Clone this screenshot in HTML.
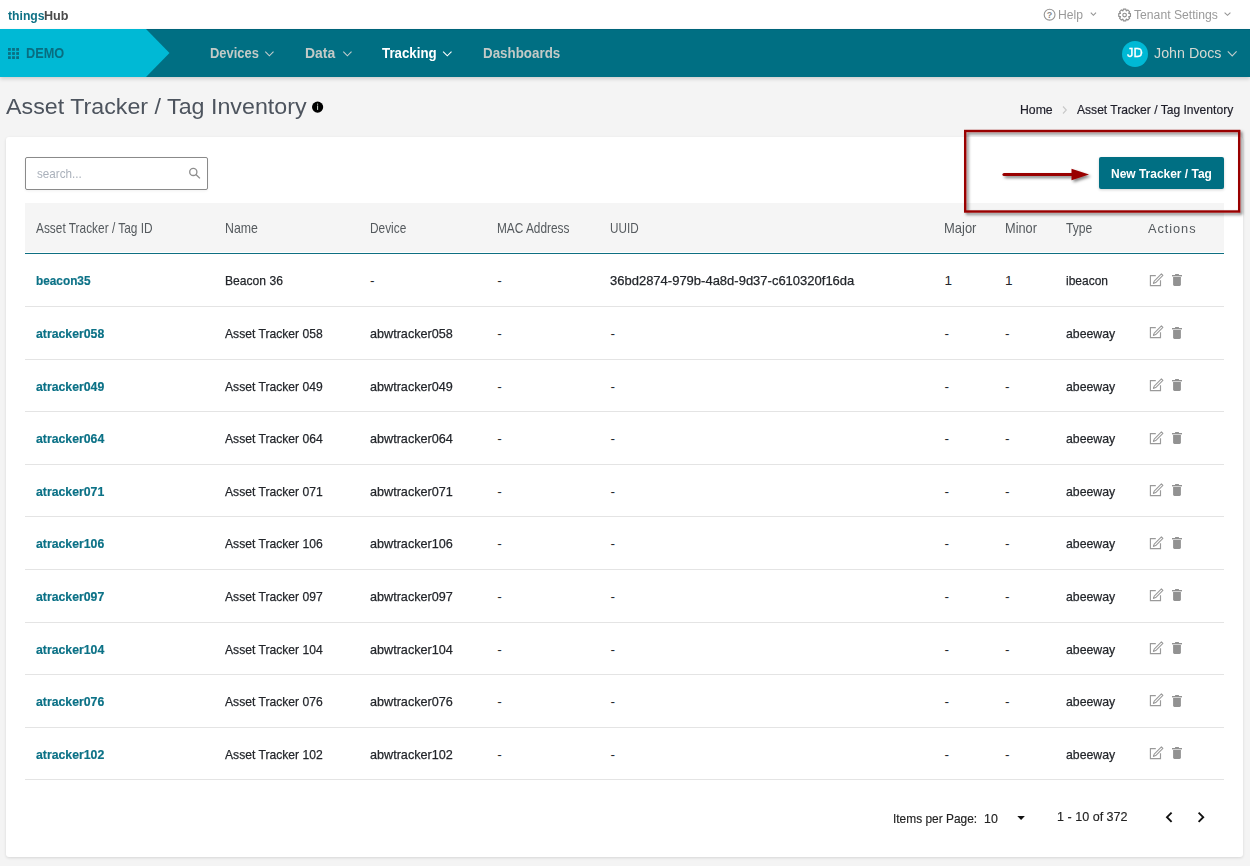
<!DOCTYPE html>
<html><head><meta charset="utf-8">
<style>
*{box-sizing:border-box;margin:0;padding:0}
html,body{width:1250px;height:866px;overflow:hidden;background:#f4f4f4;font-family:"Liberation Sans",sans-serif;color:#333}
.t{position:absolute;white-space:nowrap;line-height:1;transform-origin:0 0}
#top{position:absolute;left:0;top:0;width:1250px;height:29px;background:#fff}
#nav{position:absolute;left:0;top:29px;width:1250px;height:48px;background:#006f83;border-top:1px solid #00647a;box-shadow:0 2px 4px rgba(0,0,0,.16)}
#card{position:absolute;left:6px;top:137px;width:1237px;height:720px;background:#fff;border-radius:3px;box-shadow:0 1px 3px rgba(0,0,0,.12)}
.sep{position:absolute;left:25px;width:1199px;height:1px;background:#e4e4e4}
.ic{position:absolute}
svg{position:absolute;overflow:visible}
</style></head><body>
<div id="top"></div>
<div id="nav"></div>
<svg style="left:0;top:29px" width="170" height="48"><polygon points="0,0 146,0 169.5,24 146,48 0,48" fill="#00b9d5"/></svg>
<svg style="left:8px;top:48px" width="12" height="12" viewBox="0 0 12 12" fill="#0b6f82">
<rect x="0" y="0" width="2.8" height="2.8"/><rect x="4.1" y="0" width="2.8" height="2.8"/><rect x="8.2" y="0" width="2.8" height="2.8"/>
<rect x="0" y="4.1" width="2.8" height="2.8"/><rect x="4.1" y="4.1" width="2.8" height="2.8"/><rect x="8.2" y="4.1" width="2.8" height="2.8"/>
<rect x="0" y="8.2" width="2.8" height="2.8"/><rect x="4.1" y="8.2" width="2.8" height="2.8"/><rect x="8.2" y="8.2" width="2.8" height="2.8"/>
</svg>
<!-- nav chevrons -->
<svg style="left:0;top:0" width="1250" height="80">
<g fill="none" stroke="#c3cdcd" stroke-width="1.1">
<path d="M265.3 51.6l4.1 4.2 4.1-4.2"/>
<path d="M343.3 51.6l4.1 4.2 4.1-4.2"/>
<path d="M443.1 51.6l4.2 4.2 4.2-4.2" stroke="#ffffff"/>
<path d="M1227.8 51.4l4.4 4.6 4.4-4.6" stroke="#bfcccc"/>
</g>
<g fill="none" stroke="#949494" stroke-width="1.1">
<path d="M1090.8 12.6l2.6 2.7 2.6-2.7"/>
<path d="M1224.6 12.6l2.9 2.7 2.9-2.7"/>
<circle cx="1049.6" cy="14.7" r="5.4"/>
</g>
<text x="1049.6" y="18" font-size="9" font-weight="bold" text-anchor="middle" fill="#8a8a8a" font-family="Liberation Sans">?</text>
<g transform="translate(1124.6 15)" fill="none" stroke="#8e8e8e" stroke-width="1.15" stroke-linejoin="round"><path d="M-1.59 -4.21 L-1.31 -5.86 L1.31 -5.86 L1.59 -4.21 L1.86 -4.10 L3.21 -5.07 L5.07 -3.21 L4.10 -1.86 L4.21 -1.59 L5.86 -1.31 L5.86 1.31 L4.21 1.59 L4.10 1.86 L5.07 3.21 L3.21 5.07 L1.86 4.10 L1.59 4.21 L1.31 5.86 L-1.31 5.86 L-1.59 4.21 L-1.86 4.10 L-3.21 5.07 L-5.07 3.21 L-4.10 1.86 L-4.21 1.59 L-5.86 1.31 L-5.86 -1.31 L-4.21 -1.59 L-4.10 -1.86 L-5.07 -3.21 L-3.21 -5.07 L-1.86 -4.10Z"/><circle r="1.8"/></g>
<circle cx="1135" cy="54" r="13" fill="#00b9d5"/>
</svg>
<div id="card"></div>
<!-- search -->
<div style="position:absolute;left:25px;top:157px;width:183px;height:33px;border:1.3px solid #8a8a8a;border-radius:2px;background:#fff;box-shadow:0 1px 3px rgba(0,0,0,.06)"></div>
<svg style="left:0;top:0" width="1250" height="866">
<g fill="none" stroke="#8d8d8d" stroke-width="1.3"><circle cx="193.3" cy="171.9" r="3.6"/><path d="M195.9 174.5l4 3.9"/></g>
</svg>
<!-- button -->
<div style="position:absolute;left:1099px;top:157px;width:125px;height:32px;background:#006f83;border-radius:2px;box-shadow:0 1px 3px rgba(0,0,0,.18)"></div>
<!-- table header -->
<div style="position:absolute;left:25px;top:203px;width:1199px;height:49px;background:#f5f5f5"></div>
<div style="position:absolute;left:25px;top:253px;width:1199px;height:1.3px;background:#0f6f82"></div>
<div class="sep" style="top:306px"></div><div class="sep" style="top:359px"></div><div class="sep" style="top:411px"></div><div class="sep" style="top:464px"></div><div class="sep" style="top:516px"></div><div class="sep" style="top:569px"></div><div class="sep" style="top:622px"></div><div class="sep" style="top:674px"></div><div class="sep" style="top:727px"></div><div class="sep" style="top:779px"></div>
<svg class="ic" style="left:1149px;top:272.8px" width="16" height="15" viewBox="0 0 16 15"><path d="M6.8 2.6H1.4V12.6H11.5V7.3" fill="none" stroke="#9a9a9a" stroke-width="1.15"/><path d="M12.4 0.9l1.5 1.5-7.2 7.2-2.3 0.8 0.8-2.3z" fill="none" stroke="#9a9a9a" stroke-width="1.05" stroke-linejoin="round"/></svg><svg class="ic" style="left:1172px;top:274.0px" width="10" height="12" viewBox="0 0 10 12"><rect x="0" y="1" width="10" height="1.4" fill="#929292"/><rect x="3" y="0" width="4" height="1.5" rx="0.5" fill="#929292"/><path d="M1.1 3.1H8.9V10.6Q8.9 11.9 7.6 11.9H2.4Q1.1 11.9 1.1 10.6Z" fill="#929292"/></svg><svg class="ic" style="left:1149px;top:325.4px" width="16" height="15" viewBox="0 0 16 15"><path d="M6.8 2.6H1.4V12.6H11.5V7.3" fill="none" stroke="#9a9a9a" stroke-width="1.15"/><path d="M12.4 0.9l1.5 1.5-7.2 7.2-2.3 0.8 0.8-2.3z" fill="none" stroke="#9a9a9a" stroke-width="1.05" stroke-linejoin="round"/></svg><svg class="ic" style="left:1172px;top:326.6px" width="10" height="12" viewBox="0 0 10 12"><rect x="0" y="1" width="10" height="1.4" fill="#929292"/><rect x="3" y="0" width="4" height="1.5" rx="0.5" fill="#929292"/><path d="M1.1 3.1H8.9V10.6Q8.9 11.9 7.6 11.9H2.4Q1.1 11.9 1.1 10.6Z" fill="#929292"/></svg><svg class="ic" style="left:1149px;top:377.9px" width="16" height="15" viewBox="0 0 16 15"><path d="M6.8 2.6H1.4V12.6H11.5V7.3" fill="none" stroke="#9a9a9a" stroke-width="1.15"/><path d="M12.4 0.9l1.5 1.5-7.2 7.2-2.3 0.8 0.8-2.3z" fill="none" stroke="#9a9a9a" stroke-width="1.05" stroke-linejoin="round"/></svg><svg class="ic" style="left:1172px;top:379.1px" width="10" height="12" viewBox="0 0 10 12"><rect x="0" y="1" width="10" height="1.4" fill="#929292"/><rect x="3" y="0" width="4" height="1.5" rx="0.5" fill="#929292"/><path d="M1.1 3.1H8.9V10.6Q8.9 11.9 7.6 11.9H2.4Q1.1 11.9 1.1 10.6Z" fill="#929292"/></svg><svg class="ic" style="left:1149px;top:430.5px" width="16" height="15" viewBox="0 0 16 15"><path d="M6.8 2.6H1.4V12.6H11.5V7.3" fill="none" stroke="#9a9a9a" stroke-width="1.15"/><path d="M12.4 0.9l1.5 1.5-7.2 7.2-2.3 0.8 0.8-2.3z" fill="none" stroke="#9a9a9a" stroke-width="1.05" stroke-linejoin="round"/></svg><svg class="ic" style="left:1172px;top:431.7px" width="10" height="12" viewBox="0 0 10 12"><rect x="0" y="1" width="10" height="1.4" fill="#929292"/><rect x="3" y="0" width="4" height="1.5" rx="0.5" fill="#929292"/><path d="M1.1 3.1H8.9V10.6Q8.9 11.9 7.6 11.9H2.4Q1.1 11.9 1.1 10.6Z" fill="#929292"/></svg><svg class="ic" style="left:1149px;top:483.0px" width="16" height="15" viewBox="0 0 16 15"><path d="M6.8 2.6H1.4V12.6H11.5V7.3" fill="none" stroke="#9a9a9a" stroke-width="1.15"/><path d="M12.4 0.9l1.5 1.5-7.2 7.2-2.3 0.8 0.8-2.3z" fill="none" stroke="#9a9a9a" stroke-width="1.05" stroke-linejoin="round"/></svg><svg class="ic" style="left:1172px;top:484.2px" width="10" height="12" viewBox="0 0 10 12"><rect x="0" y="1" width="10" height="1.4" fill="#929292"/><rect x="3" y="0" width="4" height="1.5" rx="0.5" fill="#929292"/><path d="M1.1 3.1H8.9V10.6Q8.9 11.9 7.6 11.9H2.4Q1.1 11.9 1.1 10.6Z" fill="#929292"/></svg><svg class="ic" style="left:1149px;top:535.6px" width="16" height="15" viewBox="0 0 16 15"><path d="M6.8 2.6H1.4V12.6H11.5V7.3" fill="none" stroke="#9a9a9a" stroke-width="1.15"/><path d="M12.4 0.9l1.5 1.5-7.2 7.2-2.3 0.8 0.8-2.3z" fill="none" stroke="#9a9a9a" stroke-width="1.05" stroke-linejoin="round"/></svg><svg class="ic" style="left:1172px;top:536.8px" width="10" height="12" viewBox="0 0 10 12"><rect x="0" y="1" width="10" height="1.4" fill="#929292"/><rect x="3" y="0" width="4" height="1.5" rx="0.5" fill="#929292"/><path d="M1.1 3.1H8.9V10.6Q8.9 11.9 7.6 11.9H2.4Q1.1 11.9 1.1 10.6Z" fill="#929292"/></svg><svg class="ic" style="left:1149px;top:588.2px" width="16" height="15" viewBox="0 0 16 15"><path d="M6.8 2.6H1.4V12.6H11.5V7.3" fill="none" stroke="#9a9a9a" stroke-width="1.15"/><path d="M12.4 0.9l1.5 1.5-7.2 7.2-2.3 0.8 0.8-2.3z" fill="none" stroke="#9a9a9a" stroke-width="1.05" stroke-linejoin="round"/></svg><svg class="ic" style="left:1172px;top:589.4px" width="10" height="12" viewBox="0 0 10 12"><rect x="0" y="1" width="10" height="1.4" fill="#929292"/><rect x="3" y="0" width="4" height="1.5" rx="0.5" fill="#929292"/><path d="M1.1 3.1H8.9V10.6Q8.9 11.9 7.6 11.9H2.4Q1.1 11.9 1.1 10.6Z" fill="#929292"/></svg><svg class="ic" style="left:1149px;top:640.7px" width="16" height="15" viewBox="0 0 16 15"><path d="M6.8 2.6H1.4V12.6H11.5V7.3" fill="none" stroke="#9a9a9a" stroke-width="1.15"/><path d="M12.4 0.9l1.5 1.5-7.2 7.2-2.3 0.8 0.8-2.3z" fill="none" stroke="#9a9a9a" stroke-width="1.05" stroke-linejoin="round"/></svg><svg class="ic" style="left:1172px;top:641.9px" width="10" height="12" viewBox="0 0 10 12"><rect x="0" y="1" width="10" height="1.4" fill="#929292"/><rect x="3" y="0" width="4" height="1.5" rx="0.5" fill="#929292"/><path d="M1.1 3.1H8.9V10.6Q8.9 11.9 7.6 11.9H2.4Q1.1 11.9 1.1 10.6Z" fill="#929292"/></svg><svg class="ic" style="left:1149px;top:693.3px" width="16" height="15" viewBox="0 0 16 15"><path d="M6.8 2.6H1.4V12.6H11.5V7.3" fill="none" stroke="#9a9a9a" stroke-width="1.15"/><path d="M12.4 0.9l1.5 1.5-7.2 7.2-2.3 0.8 0.8-2.3z" fill="none" stroke="#9a9a9a" stroke-width="1.05" stroke-linejoin="round"/></svg><svg class="ic" style="left:1172px;top:694.5px" width="10" height="12" viewBox="0 0 10 12"><rect x="0" y="1" width="10" height="1.4" fill="#929292"/><rect x="3" y="0" width="4" height="1.5" rx="0.5" fill="#929292"/><path d="M1.1 3.1H8.9V10.6Q8.9 11.9 7.6 11.9H2.4Q1.1 11.9 1.1 10.6Z" fill="#929292"/></svg><svg class="ic" style="left:1149px;top:745.8px" width="16" height="15" viewBox="0 0 16 15"><path d="M6.8 2.6H1.4V12.6H11.5V7.3" fill="none" stroke="#9a9a9a" stroke-width="1.15"/><path d="M12.4 0.9l1.5 1.5-7.2 7.2-2.3 0.8 0.8-2.3z" fill="none" stroke="#9a9a9a" stroke-width="1.05" stroke-linejoin="round"/></svg><svg class="ic" style="left:1172px;top:747.0px" width="10" height="12" viewBox="0 0 10 12"><rect x="0" y="1" width="10" height="1.4" fill="#929292"/><rect x="3" y="0" width="4" height="1.5" rx="0.5" fill="#929292"/><path d="M1.1 3.1H8.9V10.6Q8.9 11.9 7.6 11.9H2.4Q1.1 11.9 1.1 10.6Z" fill="#929292"/></svg>
<!-- info icon -->
<svg style="left:0;top:0" width="400" height="130">
<circle cx="317.6" cy="107.1" r="5.6" fill="#000"/>
<rect x="317.1" y="103.6" width="1" height="1.1" fill="#cfd8cf"/><rect x="317.1" y="105.5" width="1" height="4.4" fill="#cfd8cf"/>
</svg>
<!-- breadcrumb chevron -->
<svg style="left:0;top:0" width="1250" height="130"><path d="M1063 106.5l3.3 3.5-3.3 3.5" fill="none" stroke="#c8c8c8" stroke-width="1.1"/></svg>
<!-- footer icons -->
<svg style="left:0;top:0" width="1250" height="866">
<path d="M1017.3 816h7.6l-3.8 4z" fill="#111"/>
<path d="M1171.6 812.6l-4.6 4.6 4.6 4.6" fill="none" stroke="#111" stroke-width="1.9"/>
<path d="M1198.6 812.6l4.6 4.6-4.6 4.6" fill="none" stroke="#111" stroke-width="1.9"/>
</svg>
<!-- red annotation -->
<svg style="left:0;top:0" width="1250" height="866">
<defs><filter id="ds" x="-20%" y="-20%" width="140%" height="140%"><feDropShadow dx="2" dy="2" stdDeviation="1.6" flood-color="#000" flood-opacity="0.5"/></filter></defs>
<g filter="url(#ds)">
<rect x="965.2" y="131" width="274" height="80.5" fill="none" stroke="#990000" stroke-width="2.4"/>
<path d="M1004 174.5H1074" stroke="#990000" stroke-width="3.2" stroke-linecap="round"/>
<path d="M1071.5 168.8L1089 174.5 1071.5 180.2z" fill="#990000"/>
</g>
</svg>
<div id="t0" class="t" style="left:8.00px;top:10.34px;font-size:12px;font-weight:700;color:#0f7185;transform:scaleX(1.0167);">things</div>
<div id="t1" class="t" style="left:43.70px;top:10.34px;font-size:12px;font-weight:700;color:#4a4a4a;transform:scaleX(1.0502);">Hub</div>
<div id="t2" class="t" style="left:1058.40px;top:8.72px;font-size:12.5px;font-weight:400;color:#9a9a9a;transform:scaleX(0.9721);">Help</div>
<div id="t3" class="t" style="left:1134.20px;top:8.72px;font-size:12.5px;font-weight:400;color:#9a9a9a;transform:scaleX(0.9736);">Tenant Settings</div>
<div id="t4" class="t" style="left:26.40px;top:45.43px;font-size:15.2px;font-weight:700;color:#086d80;transform:scaleX(0.8384);">DEMO</div>
<div id="t5" class="t" style="left:210.30px;top:46.18px;font-size:14.2px;font-weight:700;color:#c3cac7;transform:scaleX(0.9116);">Devices</div>
<div id="t6" class="t" style="left:305.40px;top:46.18px;font-size:14.2px;font-weight:700;color:#c3cac7;transform:scaleX(0.9816);">Data</div>
<div id="t7" class="t" style="left:381.90px;top:46.08px;font-size:14.2px;font-weight:700;color:#ffffff;transform:scaleX(0.9356);">Tracking</div>
<div id="t8" class="t" style="left:483.30px;top:46.18px;font-size:14.2px;font-weight:700;color:#c3cac7;transform:scaleX(0.9427);">Dashboards</div>
<div id="t9" class="t" style="left:1127.30px;top:46.63px;font-size:12.6px;font-weight:400;color:#ffffff;transform:scaleX(1.0126);-webkit-text-stroke:0.35px #fff;">JD</div>
<div id="t10" class="t" style="left:1154.20px;top:45.93px;font-size:14.5px;font-weight:400;color:#d5d8d2;transform:scaleX(0.9837);">John Docs</div>
<div id="t11" class="t" style="left:6.20px;top:95.97px;font-size:22.6px;font-weight:400;color:#4d545e;transform:scaleX(1.0288);">Asset Tracker / Tag Inventory</div>
<div id="t12" class="t" style="left:1019.90px;top:102.80px;font-size:13px;font-weight:400;color:#1f1f2a;transform:scaleX(0.9427);-webkit-text-stroke:0.2px #1f1f2a;">Home</div>
<div id="t13" class="t" style="left:1077.40px;top:102.80px;font-size:13px;font-weight:400;color:#1f1f2a;transform:scaleX(0.9291);-webkit-text-stroke:0.2px #1f1f2a;">Asset Tracker / Tag Inventory</div>
<div id="t14" class="t" style="left:37.20px;top:167.40px;font-size:13px;font-weight:400;color:#aab1bb;transform:scaleX(0.8985);">search...</div>
<div id="t15" class="t" style="left:1111.20px;top:167.30px;font-size:13px;font-weight:700;color:#ffffff;transform:scaleX(0.9207);">New Tracker / Tag</div>
<div id="t16" class="t" style="left:35.70px;top:222.03px;font-size:13.9px;font-weight:400;color:#555a5e;transform:scaleX(0.8549);">Asset Tracker / Tag ID</div>
<div id="t17" class="t" style="left:225.00px;top:222.03px;font-size:13.9px;font-weight:400;color:#555a5e;transform:scaleX(0.8877);">Name</div>
<div id="t18" class="t" style="left:369.90px;top:222.03px;font-size:13.9px;font-weight:400;color:#555a5e;transform:scaleX(0.8547);">Device</div>
<div id="t19" class="t" style="left:496.60px;top:222.03px;font-size:13.9px;font-weight:400;color:#555a5e;transform:scaleX(0.8525);">MAC Address</div>
<div id="t20" class="t" style="left:609.50px;top:222.03px;font-size:13.9px;font-weight:400;color:#555a5e;transform:scaleX(0.8420);">UUID</div>
<div id="t21" class="t" style="left:943.60px;top:222.03px;font-size:13.9px;font-weight:400;color:#555a5e;transform:scaleX(0.9328);">Major</div>
<div id="t22" class="t" style="left:1004.80px;top:222.03px;font-size:13.9px;font-weight:400;color:#555a5e;transform:scaleX(0.9184);">Minor</div>
<div id="t23" class="t" style="left:1065.50px;top:222.03px;font-size:13.9px;font-weight:400;color:#555a5e;transform:scaleX(0.8763);">Type</div>
<div id="t24" class="t" style="left:1148.30px;top:221.80px;font-size:13.7px;font-weight:400;color:#555a5e;transform:scaleX(0.9347);letter-spacing:1.0px;">Actions</div>
<div id="t25" class="t" style="left:35.90px;top:274.39px;font-size:13.6px;font-weight:700;color:#0b7186;transform:scaleX(0.8690);-webkit-text-stroke:0.2px #0b7186;">beacon35</div>
<div id="t26" class="t" style="left:225.00px;top:274.39px;font-size:13.6px;font-weight:400;color:#23262b;transform:scaleX(0.8906);-webkit-text-stroke:0.25px #23262b;">Beacon 36</div>
<div id="t27" class="t" style="left:370.00px;top:274.39px;font-size:13.6px;font-weight:400;color:#23262b;transform:scaleX(1.0000);">-</div>
<div id="t28" class="t" style="left:497.20px;top:274.39px;font-size:13.6px;font-weight:400;color:#23262b;transform:scaleX(1.0000);">-</div>
<div id="t29" class="t" style="left:609.60px;top:274.39px;font-size:13.6px;font-weight:400;color:#23262b;transform:scaleX(0.9562);-webkit-text-stroke:0.25px #23262b;">36bd2874-979b-4a8d-9d37-c610320f16da</div>
<div id="t30" class="t" style="left:944.40px;top:274.39px;font-size:13.6px;font-weight:400;color:#23262b;transform:scaleX(1.0000);">1</div>
<div id="t31" class="t" style="left:1005.00px;top:274.39px;font-size:13.6px;font-weight:400;color:#23262b;transform:scaleX(1.0000);">1</div>
<div id="t32" class="t" style="left:1065.70px;top:274.39px;font-size:13.6px;font-weight:400;color:#23262b;transform:scaleX(0.8819);-webkit-text-stroke:0.25px #23262b;">ibeacon</div>
<div id="t33" class="t" style="left:35.90px;top:327.29px;font-size:13.6px;font-weight:700;color:#0b7186;transform:scaleX(0.9022);-webkit-text-stroke:0.2px #0b7186;">atracker058</div>
<div id="t34" class="t" style="left:225.00px;top:327.29px;font-size:13.6px;font-weight:400;color:#23262b;transform:scaleX(0.8917);-webkit-text-stroke:0.25px #23262b;">Asset Tracker 058</div>
<div id="t35" class="t" style="left:370.00px;top:327.29px;font-size:13.6px;font-weight:400;color:#23262b;transform:scaleX(0.9285);-webkit-text-stroke:0.25px #23262b;">abwtracker058</div>
<div id="t36" class="t" style="left:497.20px;top:327.29px;font-size:13.6px;font-weight:400;color:#23262b;transform:scaleX(1.0000);">-</div>
<div id="t37" class="t" style="left:610.60px;top:327.29px;font-size:13.6px;font-weight:400;color:#23262b;transform:scaleX(1.0000);">-</div>
<div id="t38" class="t" style="left:944.40px;top:327.29px;font-size:13.6px;font-weight:400;color:#23262b;transform:scaleX(1.0000);">-</div>
<div id="t39" class="t" style="left:1005.00px;top:327.29px;font-size:13.6px;font-weight:400;color:#23262b;transform:scaleX(1.0000);">-</div>
<div id="t40" class="t" style="left:1065.70px;top:327.29px;font-size:13.6px;font-weight:400;color:#23262b;transform:scaleX(0.9040);-webkit-text-stroke:0.25px #23262b;">abeeway</div>
<div id="t41" class="t" style="left:35.90px;top:379.59px;font-size:13.6px;font-weight:700;color:#0b7186;transform:scaleX(0.9022);-webkit-text-stroke:0.2px #0b7186;">atracker049</div>
<div id="t42" class="t" style="left:225.00px;top:379.59px;font-size:13.6px;font-weight:400;color:#23262b;transform:scaleX(0.8917);-webkit-text-stroke:0.25px #23262b;">Asset Tracker 049</div>
<div id="t43" class="t" style="left:370.00px;top:379.59px;font-size:13.6px;font-weight:400;color:#23262b;transform:scaleX(0.9285);-webkit-text-stroke:0.25px #23262b;">abwtracker049</div>
<div id="t44" class="t" style="left:497.20px;top:379.59px;font-size:13.6px;font-weight:400;color:#23262b;transform:scaleX(1.0000);">-</div>
<div id="t45" class="t" style="left:610.60px;top:379.59px;font-size:13.6px;font-weight:400;color:#23262b;transform:scaleX(1.0000);">-</div>
<div id="t46" class="t" style="left:944.40px;top:379.59px;font-size:13.6px;font-weight:400;color:#23262b;transform:scaleX(1.0000);">-</div>
<div id="t47" class="t" style="left:1005.00px;top:379.59px;font-size:13.6px;font-weight:400;color:#23262b;transform:scaleX(1.0000);">-</div>
<div id="t48" class="t" style="left:1065.70px;top:379.59px;font-size:13.6px;font-weight:400;color:#23262b;transform:scaleX(0.9040);-webkit-text-stroke:0.25px #23262b;">abeeway</div>
<div id="t49" class="t" style="left:35.90px;top:432.39px;font-size:13.6px;font-weight:700;color:#0b7186;transform:scaleX(0.9022);-webkit-text-stroke:0.2px #0b7186;">atracker064</div>
<div id="t50" class="t" style="left:225.00px;top:432.39px;font-size:13.6px;font-weight:400;color:#23262b;transform:scaleX(0.8917);-webkit-text-stroke:0.25px #23262b;">Asset Tracker 064</div>
<div id="t51" class="t" style="left:370.00px;top:432.39px;font-size:13.6px;font-weight:400;color:#23262b;transform:scaleX(0.9285);-webkit-text-stroke:0.25px #23262b;">abwtracker064</div>
<div id="t52" class="t" style="left:497.20px;top:432.39px;font-size:13.6px;font-weight:400;color:#23262b;transform:scaleX(1.0000);">-</div>
<div id="t53" class="t" style="left:610.60px;top:432.39px;font-size:13.6px;font-weight:400;color:#23262b;transform:scaleX(1.0000);">-</div>
<div id="t54" class="t" style="left:944.40px;top:432.39px;font-size:13.6px;font-weight:400;color:#23262b;transform:scaleX(1.0000);">-</div>
<div id="t55" class="t" style="left:1005.00px;top:432.39px;font-size:13.6px;font-weight:400;color:#23262b;transform:scaleX(1.0000);">-</div>
<div id="t56" class="t" style="left:1065.70px;top:432.39px;font-size:13.6px;font-weight:400;color:#23262b;transform:scaleX(0.9040);-webkit-text-stroke:0.25px #23262b;">abeeway</div>
<div id="t57" class="t" style="left:35.90px;top:484.89px;font-size:13.6px;font-weight:700;color:#0b7186;transform:scaleX(0.9022);-webkit-text-stroke:0.2px #0b7186;">atracker071</div>
<div id="t58" class="t" style="left:225.00px;top:484.89px;font-size:13.6px;font-weight:400;color:#23262b;transform:scaleX(0.8917);-webkit-text-stroke:0.25px #23262b;">Asset Tracker 071</div>
<div id="t59" class="t" style="left:370.00px;top:484.89px;font-size:13.6px;font-weight:400;color:#23262b;transform:scaleX(0.9285);-webkit-text-stroke:0.25px #23262b;">abwtracker071</div>
<div id="t60" class="t" style="left:497.20px;top:484.89px;font-size:13.6px;font-weight:400;color:#23262b;transform:scaleX(1.0000);">-</div>
<div id="t61" class="t" style="left:610.60px;top:484.89px;font-size:13.6px;font-weight:400;color:#23262b;transform:scaleX(1.0000);">-</div>
<div id="t62" class="t" style="left:944.40px;top:484.89px;font-size:13.6px;font-weight:400;color:#23262b;transform:scaleX(1.0000);">-</div>
<div id="t63" class="t" style="left:1005.00px;top:484.89px;font-size:13.6px;font-weight:400;color:#23262b;transform:scaleX(1.0000);">-</div>
<div id="t64" class="t" style="left:1065.70px;top:484.89px;font-size:13.6px;font-weight:400;color:#23262b;transform:scaleX(0.9040);-webkit-text-stroke:0.25px #23262b;">abeeway</div>
<div id="t65" class="t" style="left:35.90px;top:537.29px;font-size:13.6px;font-weight:700;color:#0b7186;transform:scaleX(0.9022);-webkit-text-stroke:0.2px #0b7186;">atracker106</div>
<div id="t66" class="t" style="left:225.00px;top:537.29px;font-size:13.6px;font-weight:400;color:#23262b;transform:scaleX(0.8917);-webkit-text-stroke:0.25px #23262b;">Asset Tracker 106</div>
<div id="t67" class="t" style="left:370.00px;top:537.29px;font-size:13.6px;font-weight:400;color:#23262b;transform:scaleX(0.9285);-webkit-text-stroke:0.25px #23262b;">abwtracker106</div>
<div id="t68" class="t" style="left:497.20px;top:537.29px;font-size:13.6px;font-weight:400;color:#23262b;transform:scaleX(1.0000);">-</div>
<div id="t69" class="t" style="left:610.60px;top:537.29px;font-size:13.6px;font-weight:400;color:#23262b;transform:scaleX(1.0000);">-</div>
<div id="t70" class="t" style="left:944.40px;top:537.29px;font-size:13.6px;font-weight:400;color:#23262b;transform:scaleX(1.0000);">-</div>
<div id="t71" class="t" style="left:1005.00px;top:537.29px;font-size:13.6px;font-weight:400;color:#23262b;transform:scaleX(1.0000);">-</div>
<div id="t72" class="t" style="left:1065.70px;top:537.29px;font-size:13.6px;font-weight:400;color:#23262b;transform:scaleX(0.9040);-webkit-text-stroke:0.25px #23262b;">abeeway</div>
<div id="t73" class="t" style="left:35.90px;top:590.19px;font-size:13.6px;font-weight:700;color:#0b7186;transform:scaleX(0.9022);-webkit-text-stroke:0.2px #0b7186;">atracker097</div>
<div id="t74" class="t" style="left:225.00px;top:590.19px;font-size:13.6px;font-weight:400;color:#23262b;transform:scaleX(0.8917);-webkit-text-stroke:0.25px #23262b;">Asset Tracker 097</div>
<div id="t75" class="t" style="left:370.00px;top:590.19px;font-size:13.6px;font-weight:400;color:#23262b;transform:scaleX(0.9285);-webkit-text-stroke:0.25px #23262b;">abwtracker097</div>
<div id="t76" class="t" style="left:497.20px;top:590.19px;font-size:13.6px;font-weight:400;color:#23262b;transform:scaleX(1.0000);">-</div>
<div id="t77" class="t" style="left:610.60px;top:590.19px;font-size:13.6px;font-weight:400;color:#23262b;transform:scaleX(1.0000);">-</div>
<div id="t78" class="t" style="left:944.40px;top:590.19px;font-size:13.6px;font-weight:400;color:#23262b;transform:scaleX(1.0000);">-</div>
<div id="t79" class="t" style="left:1005.00px;top:590.19px;font-size:13.6px;font-weight:400;color:#23262b;transform:scaleX(1.0000);">-</div>
<div id="t80" class="t" style="left:1065.70px;top:590.19px;font-size:13.6px;font-weight:400;color:#23262b;transform:scaleX(0.9040);-webkit-text-stroke:0.25px #23262b;">abeeway</div>
<div id="t81" class="t" style="left:35.90px;top:642.59px;font-size:13.6px;font-weight:700;color:#0b7186;transform:scaleX(0.9022);-webkit-text-stroke:0.2px #0b7186;">atracker104</div>
<div id="t82" class="t" style="left:225.00px;top:642.59px;font-size:13.6px;font-weight:400;color:#23262b;transform:scaleX(0.8917);-webkit-text-stroke:0.25px #23262b;">Asset Tracker 104</div>
<div id="t83" class="t" style="left:370.00px;top:642.59px;font-size:13.6px;font-weight:400;color:#23262b;transform:scaleX(0.9285);-webkit-text-stroke:0.25px #23262b;">abwtracker104</div>
<div id="t84" class="t" style="left:497.20px;top:642.59px;font-size:13.6px;font-weight:400;color:#23262b;transform:scaleX(1.0000);">-</div>
<div id="t85" class="t" style="left:610.60px;top:642.59px;font-size:13.6px;font-weight:400;color:#23262b;transform:scaleX(1.0000);">-</div>
<div id="t86" class="t" style="left:944.40px;top:642.59px;font-size:13.6px;font-weight:400;color:#23262b;transform:scaleX(1.0000);">-</div>
<div id="t87" class="t" style="left:1005.00px;top:642.59px;font-size:13.6px;font-weight:400;color:#23262b;transform:scaleX(1.0000);">-</div>
<div id="t88" class="t" style="left:1065.70px;top:642.59px;font-size:13.6px;font-weight:400;color:#23262b;transform:scaleX(0.9040);-webkit-text-stroke:0.25px #23262b;">abeeway</div>
<div id="t89" class="t" style="left:35.90px;top:695.09px;font-size:13.6px;font-weight:700;color:#0b7186;transform:scaleX(0.9022);-webkit-text-stroke:0.2px #0b7186;">atracker076</div>
<div id="t90" class="t" style="left:225.00px;top:695.09px;font-size:13.6px;font-weight:400;color:#23262b;transform:scaleX(0.8917);-webkit-text-stroke:0.25px #23262b;">Asset Tracker 076</div>
<div id="t91" class="t" style="left:370.00px;top:695.09px;font-size:13.6px;font-weight:400;color:#23262b;transform:scaleX(0.9285);-webkit-text-stroke:0.25px #23262b;">abwtracker076</div>
<div id="t92" class="t" style="left:497.20px;top:695.09px;font-size:13.6px;font-weight:400;color:#23262b;transform:scaleX(1.0000);">-</div>
<div id="t93" class="t" style="left:610.60px;top:695.09px;font-size:13.6px;font-weight:400;color:#23262b;transform:scaleX(1.0000);">-</div>
<div id="t94" class="t" style="left:944.40px;top:695.09px;font-size:13.6px;font-weight:400;color:#23262b;transform:scaleX(1.0000);">-</div>
<div id="t95" class="t" style="left:1005.00px;top:695.09px;font-size:13.6px;font-weight:400;color:#23262b;transform:scaleX(1.0000);">-</div>
<div id="t96" class="t" style="left:1065.70px;top:695.09px;font-size:13.6px;font-weight:400;color:#23262b;transform:scaleX(0.9040);-webkit-text-stroke:0.25px #23262b;">abeeway</div>
<div id="t97" class="t" style="left:35.90px;top:747.99px;font-size:13.6px;font-weight:700;color:#0b7186;transform:scaleX(0.9022);-webkit-text-stroke:0.2px #0b7186;">atracker102</div>
<div id="t98" class="t" style="left:225.00px;top:747.99px;font-size:13.6px;font-weight:400;color:#23262b;transform:scaleX(0.8917);-webkit-text-stroke:0.25px #23262b;">Asset Tracker 102</div>
<div id="t99" class="t" style="left:370.00px;top:747.99px;font-size:13.6px;font-weight:400;color:#23262b;transform:scaleX(0.9285);-webkit-text-stroke:0.25px #23262b;">abwtracker102</div>
<div id="t100" class="t" style="left:497.20px;top:747.99px;font-size:13.6px;font-weight:400;color:#23262b;transform:scaleX(1.0000);">-</div>
<div id="t101" class="t" style="left:610.60px;top:747.99px;font-size:13.6px;font-weight:400;color:#23262b;transform:scaleX(1.0000);">-</div>
<div id="t102" class="t" style="left:944.40px;top:747.99px;font-size:13.6px;font-weight:400;color:#23262b;transform:scaleX(1.0000);">-</div>
<div id="t103" class="t" style="left:1005.00px;top:747.99px;font-size:13.6px;font-weight:400;color:#23262b;transform:scaleX(1.0000);">-</div>
<div id="t104" class="t" style="left:1065.70px;top:747.99px;font-size:13.6px;font-weight:400;color:#23262b;transform:scaleX(0.9040);-webkit-text-stroke:0.25px #23262b;">abeeway</div>
<div id="t105" class="t" style="left:893.40px;top:811.80px;font-size:13px;font-weight:400;color:#222;transform:scaleX(0.9163);-webkit-text-stroke:0.15px #222;">Items per Page:</div>
<div id="t106" class="t" style="left:984.20px;top:811.80px;font-size:13px;font-weight:400;color:#222;transform:scaleX(0.9538);-webkit-text-stroke:0.15px #222;">10</div>
<div id="t107" class="t" style="left:1057.30px;top:809.90px;font-size:13px;font-weight:400;color:#222;transform:scaleX(0.9671);-webkit-text-stroke:0.15px #222;">1 - 10 of 372</div>
</body></html>
